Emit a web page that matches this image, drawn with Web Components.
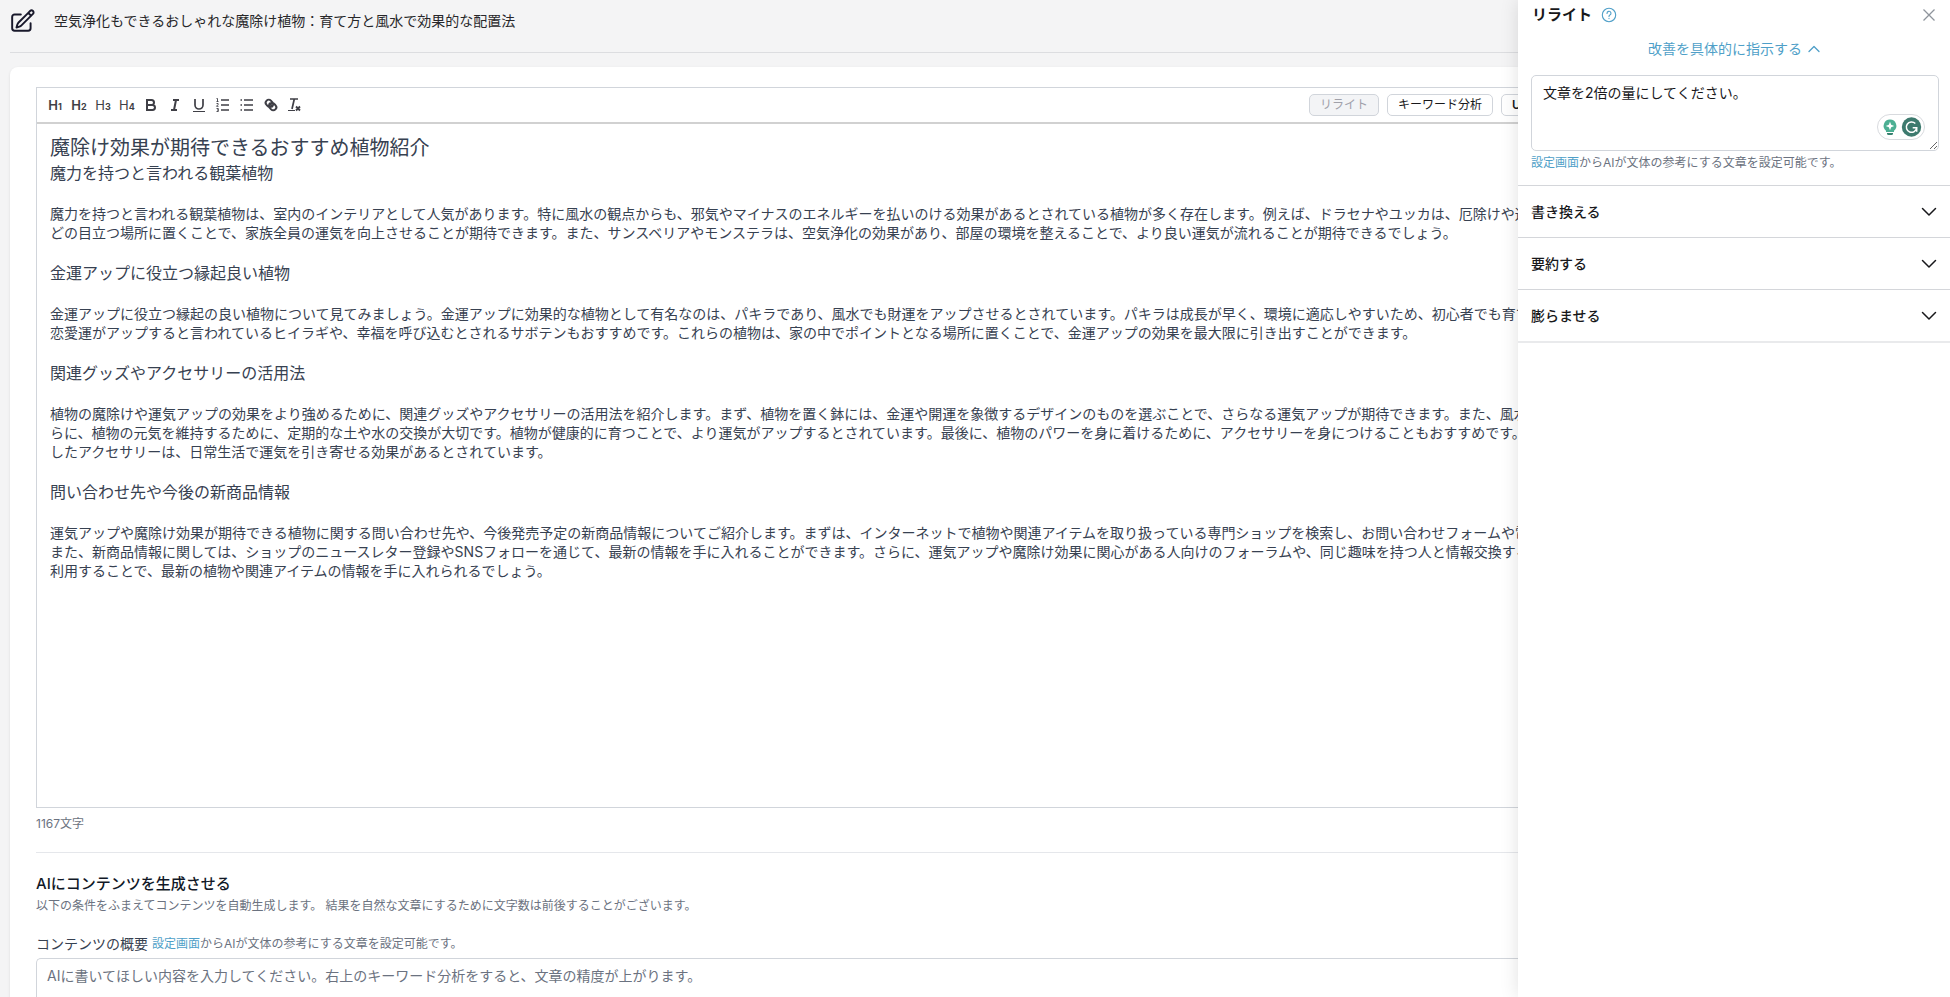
<!DOCTYPE html>
<html lang="ja">
<head>
<meta charset="UTF-8">
<title>リライト</title>
<style>
    html, body {
        margin: 0;
        height: 100%;
    }

    body {
        overflow: hidden;
        background: #f4f4f5;
        color: #374151;
        font: 14px/20px Inter, "Noto Sans CJK JP", sans-serif;
    }
</style>
</head>
<body>
<app-page>
    <page-header slot="header">空気浄化もできるおしゃれな魔除け植物：育て方と風水で効果的な配置法</page-header>

    <article-editor count="1167文字">
        <h2>魔除け効果が期待できるおすすめ植物紹介</h2>
        <h3>魔力を持つと言われる観葉植物</h3>
        <p>魔力を持つと言われる観葉植物は、室内のインテリアとして人気があります。特に風水の観点からも、邪気やマイナスのエネルギーを払いのける効果があるとされている植物が多く存在します。例えば、ドラセナやユッカは、厄除けや運気アッ<br>どの目立つ場所に置くことで、家族全員の運気を向上させることが期待できます。また、サンスベリアやモンステラは、空気浄化の効果があり、部屋の環境を整えることで、より良い運気が流れることが期待できるでしょう。</p>
        <h3>金運アップに役立つ縁起良い植物</h3>
        <p>金運アップに役立つ縁起の良い植物について見てみましょう。金運アップに効果的な植物として有名なのは、パキラであり、風水でも財運をアップさせるとされています。パキラは成長が早く、環境に適応しやすいため、初心者でも育てやすい<br>恋愛運がアップすると言われているヒイラギや、幸福を呼び込むとされるサボテンもおすすめです。これらの植物は、家の中でポイントとなる場所に置くことで、金運アップの効果を最大限に引き出すことができます。</p>
        <h3>関連グッズやアクセサリーの活用法</h3>
        <p>植物の魔除けや運気アップの効果をより強めるために、関連グッズやアクセサリーの活用法を紹介します。まず、植物を置く鉢には、金運や開運を象徴するデザインのものを選ぶことで、さらなる運気アップが期待できます。また、風水で重視<br>らに、植物の元気を維持するために、定期的な土や水の交換が大切です。植物が健康的に育つことで、より運気がアップするとされています。最後に、植物のパワーを身に着けるために、アクセサリーを身につけることもおすすめです。例えば<br>したアクセサリーは、日常生活で運気を引き寄せる効果があるとされています。</p>
        <h3>問い合わせ先や今後の新商品情報</h3>
        <p>運気アップや魔除け効果が期待できる植物に関する問い合わせ先や、今後発売予定の新商品情報についてご紹介します。まずは、インターネットで植物や関連アイテムを取り扱っている専門ショップを検索し、お問い合わせフォームや電話番号<br>また、新商品情報に関しては、ショップのニュースレター登録やSNSフォローを通じて、最新の情報を手に入れることができます。さらに、運気アップや魔除け効果に関心がある人向けのフォーラムや、同じ趣味を持つ人と情報交換するための<br>利用することで、最新の植物や関連アイテムの情報を手に入れられるでしょう。</p>
    </article-editor>

    <content-generator></content-generator>

    <rewrite-panel slot="panel">
        <panel-item>書き換える</panel-item>
        <panel-item>要約する</panel-item>
        <panel-item>膨らませる</panel-item>
    </rewrite-panel>
</app-page>

<script>
function render(el, html) {
    const template = document.createElement("template");
    template.innerHTML = html;
    el.attachShadow({ mode: "open" });
    el.shadowRoot.appendChild(template.content.cloneNode(true));
}

// Page frame
class AppPage extends HTMLElement {
    constructor() {
        super();
        render(this, `
            <style>
                :host {
                    display: flex;
                    height: 100%;
                    overflow: hidden;
                }

                .page {
                    flex: 1;
                    display: flex;
                    flex-direction: column;
                    min-width: 0;
                    padding-left: 10px;
                    overflow: hidden;
                }

                .card {
                    flex: 1 0 auto;
                    margin-top: 14px;
                    padding: 20px 0 20px 26px;
                    background: #fff;
                    border-radius: 8px 0 0 0;
                    box-shadow: 0 1px 3px rgba(0, 0, 0, 0.1);
                }

                /* keeps the drawer's shadow above the page */
                .drawer {
                    flex: none;
                    width: 432px;
                    z-index: 1;
                }
            </style>
            <div class="page">
                <slot name="header"></slot>
                <main class="card"><slot></slot></main>
            </div>
            <div class="drawer"><slot name="panel"></slot></div>
        `);
    }
}

class PageHeader extends HTMLElement {
    constructor() {
        super();
        render(this, `
            <style>
                :host {
                    flex: none;
                    display: flex;
                    align-items: center;
                    gap: 18px;
                    height: 42px;
                    padding-bottom: 10px;
                    border-bottom: 1px solid #dcdde0;
                    color: #27272a;
                }

                svg {
                    flex: none;
                }

                h1 {
                    margin: 0;
                    font-size: 14px;
                    font-weight: 400;
                    line-height: 20px;
                }
            </style>
            <svg width="26" height="26" viewBox="0 0 24 24" fill="none" stroke="#18182b" stroke-width="1.8" stroke-linecap="round" stroke-linejoin="round">
                <path d="M16.86 4.49l1.69-1.69a1.87 1.87 0 1 1 2.65 2.65L10.58 16.07a4.5 4.5 0 0 1-1.9 1.13L6 18l.8-2.69a4.5 4.5 0 0 1 1.13-1.9l8.93-8.92zm0 0L19.5 7.12M19 14v4.75A2.25 2.25 0 0 1 16.75 21H4.25A2.25 2.25 0 0 1 2 18.75V8.25A2.25 2.25 0 0 1 4.25 6H10"/>
            </svg>
            <h1><slot></slot></h1>
        `);
    }
}

// Editor: toolbar + text area
class ArticleEditor extends HTMLElement {
    constructor() {
        super();
        render(this, `
            <style>
                :host {
                    display: block;
                }

                .box {
                    border: 1px solid #d1d5db;
                    border-right: 0;
                }

                .toolbar {
                    display: flex;
                    align-items: center;
                    height: 34px;
                    padding-left: 6px;
                    border-bottom: 2px solid #d1d1d1;
                }

                .tool {
                    flex: none;
                    width: 24px;
                    height: 24px;
                    padding: 3px;
                    border: 0;
                    background: none;
                    color: #3f3f46;
                    font: 600 13px/18px Inter, sans-serif;
                    white-space: nowrap;
                }

                .tool.thin {
                    font-weight: 400;
                }

                .tool small {
                    font-size: 9px;
                    font-weight: 700;
                }

                .tool svg {
                    display: block;
                    width: 18px;
                    height: 18px;
                    fill: none;
                    stroke: currentColor;
                    stroke-width: 2;
                }

                .actions {
                    display: flex;
                    gap: 8px;
                    /* the last button runs out under the drawer */
                    width: 209px;
                    margin-left: auto;
                }

                .action {
                    flex: none;
                    height: 22px;
                    padding: 0 10px;
                    border: 1px solid #d1d5db;
                    border-radius: 5px;
                    background: #fff;
                    color: #18181b;
                    font: 12px/18px Inter, "Noto Sans CJK JP", sans-serif;
                    white-space: nowrap;
                }

                .action:disabled {
                    background: #f3f4f6;
                    color: #a1a1aa;
                }

                .action.latin {
                    width: 80px;
                    font-weight: 600;
                    text-align: left;
                }

                .text {
                    box-sizing: border-box;
                    min-height: 683px;
                    padding: 10px 0 0 13px;
                    overflow: hidden;
                    white-space: nowrap;
                }

                ::slotted(h2) {
                    margin: 0;
                    font-size: 20px;
                    font-weight: 400;
                    line-height: 28px;
                }

                ::slotted(h3) {
                    margin: 0 0 20px;
                    font-size: 16px;
                    font-weight: 400;
                    line-height: 22px;
                }

                ::slotted(p) {
                    margin: 0 0 20px;
                    line-height: 19px;
                }

                .count {
                    margin: 6px 0 18px;
                    font-size: 12px;
                    line-height: 20px;
                    color: #6b7280;
                }
            </style>
            <div class="box">
                <div class="toolbar">
                    <button class="tool" aria-label="見出し1">H<small>1</small></button>
                    <button class="tool" aria-label="見出し2">H<small>2</small></button>
                    <button class="tool thin" aria-label="見出し3">H<small>3</small></button>
                    <button class="tool thin" aria-label="見出し4">H<small>4</small></button>
                    <button class="tool" aria-label="太字"><svg viewBox="0 0 18 18"><path d="M5 4h4.500a2.500 2.500 0 0 1 0 5H5zM5 9h5.500a2.500 2.500 0 0 1 0 5H5z"/></svg></button>
                    <button class="tool" aria-label="斜体"><svg viewBox="0 0 18 18"><path d="M7 4h6M5 14h6M8 14l2-10"/></svg></button>
                    <button class="tool" aria-label="下線"><svg viewBox="0 0 18 18"><path d="M5 3v6a4 4 0 0 0 8 0V3" stroke-width="1.7"/><path d="M3 15.5h12" stroke-width="1"/></svg></button>
                    <button class="tool" aria-label="番号付きリスト"><svg viewBox="0 0 18 18"><path d="M7 4h8M7 9h8M7 14h8" stroke-width="1.7"/><path d="M2.500 2.500h1v3M2.500 5.500h2M2.500 7.500h1.600v1L2.500 10.300h2M2.500 12.500h1.800v3H2.500M3 14h1.300" stroke-width=".9"/></svg></button>
                    <button class="tool" aria-label="リスト"><svg viewBox="0 0 18 18"><path d="M6 4h9M6 9h9M6 14h9M2.500 4H4M2.500 9H4M2.500 14H4" stroke-width="1.7"/></svg></button>
                    <button class="tool" aria-label="リンク"><svg viewBox="0 0 18 18"><path d="M7 7l4 4M8.900 4.600a3 3 0 0 0-4.300 4.300l1.900 1.700a3 3 0 0 0 4.100-4.100zM9.100 13.400a3 3 0 0 0 4.300-4.300l-1.900-1.700a3 3 0 0 0-4.100 4.100z"/></svg></button>
                    <button class="tool" aria-label="書式を消す"><svg viewBox="0 0 18 18"><path d="M4 3h8M8.300 3L6 13" stroke-width="1.7"/><path d="M2 14.500h7" stroke-width="1"/><path d="M10 10.500l4 4M14 10.500l-4 4" stroke-width="1.8"/></svg></button>
                    <div class="actions">
                        <button class="action" disabled>リライト</button>
                        <button class="action">キーワード分析</button>
                        <button class="action latin">U</button>
                    </div>
                </div>
                <div class="text"><slot></slot></div>
            </div>
            <div class="count"></div>
        `);
    }

    connectedCallback() {
        this.shadowRoot.querySelector(".count").textContent = this.getAttribute("count");
    }
}

class ContentGenerator extends HTMLElement {
    constructor() {
        super();
        render(this, `
            <style>
                :host {
                    display: block;
                    padding-top: 20px;
                    border-top: 1px solid #e5e7eb;
                }

                h2 {
                    margin: 0;
                    font-size: 15px;
                    font-weight: 500;
                    line-height: 22px;
                    color: #111827;
                }

                p {
                    margin: 1px 0 18px;
                    font-size: 12px;
                    line-height: 20px;
                    color: #6b7280;
                }

                .row {
                    display: flex;
                    align-items: center;
                    gap: 4px;
                    margin-bottom: 4px;
                    font-size: 12px;
                    line-height: 20px;
                    color: #6b7280;
                }

                label {
                    font-size: 14px;
                    color: #374151;
                }

                a {
                    color: #4f9fc8;
                    text-decoration: none;
                }

                textarea {
                    display: block;
                    box-sizing: border-box;
                    width: 100%;
                    height: 100px;
                    padding: 7px 10px;
                    border: 1px solid #d1d5db;
                    border-right: 0;
                    border-radius: 5px 0 0 5px;
                    font: inherit;
                    resize: vertical;
                }

                textarea::placeholder {
                    color: #6b7280;
                }
            </style>
            <h2>AIにコンテンツを生成させる</h2>
            <p>以下の条件をふまえてコンテンツを自動生成します。 結果を自然な文章にするために文字数は前後することがございます。</p>
            <div class="row">
                <label for="summary">コンテンツの概要</label>
                <span><a href="#">設定画面</a>からAIが文体の参考にする文章を設定可能です。</span>
            </div>
            <textarea id="summary" placeholder="AIに書いてほしい内容を入力してください。右上のキーワード分析をすると、文章の精度が上がります。"></textarea>
        `);
    }
}

// Drawer on the right
class RewritePanel extends HTMLElement {
    constructor() {
        super();
        render(this, `
            <style>
                :host {
                    display: block;
                    height: 100%;
                    background: #fff;
                    box-shadow: 0 0 18px rgba(0, 0, 0, 0.12);
                }

                header {
                    display: flex;
                    align-items: center;
                    gap: 9px;
                    height: 30px;
                    padding: 0 14px;
                }

                h2 {
                    margin: 0;
                    font-size: 15px;
                    font-weight: 700;
                    line-height: 20px;
                    color: #18181b;
                }

                button {
                    padding: 0;
                    border: 0;
                    background: none;
                    font: inherit;
                }

                svg {
                    display: block;
                }

                .close {
                    margin-left: auto;
                }

                .toggle {
                    display: flex;
                    align-items: center;
                    gap: 6px;
                    margin: 9px auto 16px;
                    color: #4f9fc8;
                }

                .form {
                    padding: 0 11px 12px 13px;
                }

                .field {
                    position: relative;
                }

                textarea {
                    display: block;
                    box-sizing: border-box;
                    width: 100%;
                    height: 76px;
                    padding: 7px 11px;
                    border: 1px solid #d1d5db;
                    border-radius: 5px;
                    color: #18181b;
                    font: inherit;
                }

                /* writing helper badge over the text box */
                .helper {
                    position: absolute;
                    right: 14px;
                    bottom: 11px;
                }

                .note {
                    margin: 2px 0 0;
                    font-size: 12px;
                    line-height: 20px;
                    color: #6b7280;
                }

                a {
                    color: #4f9fc8;
                    text-decoration: none;
                }

                .items {
                    border-bottom: 2px solid #e9eaec;
                }
            </style>
            <header>
                <h2>リライト</h2>
                <button aria-label="ヘルプ">
                    <svg width="16" height="16" viewBox="0 0 16 16" fill="none" stroke="#4f9fc8" stroke-width="1.1" stroke-linecap="round">
                        <circle cx="8" cy="8" r="6.7"/>
                        <path d="M6 6.400a2 2 0 1 1 2.900 1.700c-.6.300-.9.600-.9 1.300M8 11.400v.2"/>
                    </svg>
                </button>
                <button class="close" aria-label="閉じる">
                    <svg width="14" height="14" viewBox="0 0 14 14" fill="none" stroke="#8f949c" stroke-width="1.3"><path d="M1.500 1.500l11 11M12.500 1.500l-11 11"/></svg>
                </button>
            </header>
            <button class="toggle">改善を具体的に指示する
                <svg width="12" height="8" viewBox="0 0 12 8" fill="none" stroke="currentColor" stroke-width="1.3" stroke-linecap="round" stroke-linejoin="round"><path d="M1 6.500L6 1.500l5 5"/></svg>
            </button>
            <div class="form">
                <div class="field">
                    <textarea aria-label="改善を具体的に指示する">文章を2倍の量にしてください。</textarea>
                    <svg class="helper" width="48" height="26" viewBox="0 0 48 26">
                        <rect x=".5" y=".5" width="47" height="25" rx="12.5" fill="#fff" stroke="#d8dade"/>
                        <path d="M13 5.500a6.300 6.300 0 0 0-4 11.200v1.300h8v-1.300a6.300 6.300 0 0 0-4-11.200z" fill="#4caf93"/>
                        <path d="M10 19h6v.5a1.500 1.500 0 0 1-1.500 1.500h-3a1.500 1.500 0 0 1-1.500-1.500z" fill="#37806f"/>
                        <path d="M13 7.800l1.200 3 3 1.200-3 1.200-1.200 3-1.200-3-3-1.200 3-1.200z" fill="#fff"/>
                        <circle cx="34.5" cy="13" r="9.7" fill="#3d7a6e"/>
                        <path d="M38.300 9.500a5.200 5.200 0 1 0 1.400 4.300h-4M39.700 13.300v4.400" fill="none" stroke="#fff" stroke-width="1.5"/>
                    </svg>
                </div>
                <p class="note"><a href="#">設定画面</a>からAIが文体の参考にする文章を設定可能です。</p>
            </div>
            <div class="items"><slot></slot></div>
        `);
    }
}

class PanelItem extends HTMLElement {
    constructor() {
        super();
        render(this, `
            <style>
                :host {
                    display: block;
                    border-top: 1px solid #d4d6da;
                }

                button {
                    display: flex;
                    align-items: center;
                    justify-content: space-between;
                    width: 100%;
                    height: 51px;
                    padding: 0 13px;
                    border: 0;
                    background: none;
                    color: #18181b;
                    font: inherit;
                    font-weight: 500;
                }
            </style>
            <button>
                <span><slot></slot></span>
                <svg width="16" height="10" viewBox="0 0 16 10" fill="none" stroke="#18181b" stroke-width="1.5" stroke-linecap="round" stroke-linejoin="round"><path d="M1.500 1.500L8 8l6.500-6.500"/></svg>
            </button>
        `);
    }
}

customElements.define("app-page", AppPage);
customElements.define("page-header", PageHeader);
customElements.define("article-editor", ArticleEditor);
customElements.define("content-generator", ContentGenerator);
customElements.define("rewrite-panel", RewritePanel);
customElements.define("panel-item", PanelItem);
</script>
</body>
</html>
